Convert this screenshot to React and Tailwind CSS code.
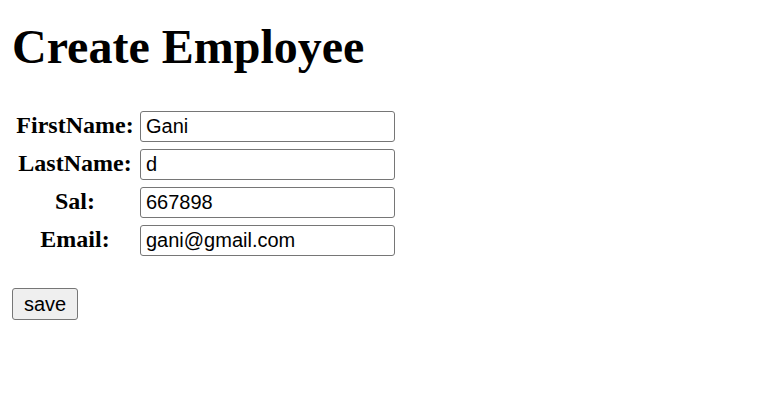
const fields = [
  { label: "FirstName:", value: "Gani" },
  { label: "LastName:", value: "d" },
  { label: "Sal:", value: "667898" },
  { label: "Email:", value: "gani@gmail.com" },
];

const App = () => {
  return (
    <div className="min-h-screen bg-white text-black pl-[12px] pt-[20px] font-['Liberation_Serif',serif]">
      <h1 className="text-[48px] font-bold leading-[53px]">Create Employee</h1>

      <form className="mt-[38px]" onSubmit={(e) => e.preventDefault()}>
        <div className="grid grid-cols-[126px_255px] gap-x-[2px] gap-y-[7px]">
          {fields.map((f) => (
            <div key={f.label} className="contents">
              <label className="pt-[1px] text-center text-[24px] font-bold leading-[27px]">
                {f.label}
              </label>
              <input
                type="text"
                defaultValue={f.value}
                className="h-[31px] w-[255px] rounded-[3px] border border-[#767676] bg-white px-[5px] text-[20px] text-black font-['Liberation_Sans',Arial,sans-serif] outline-none"
              />
            </div>
          ))}
        </div>

        <button
          type="submit"
          className="mt-[32px] h-[32px] rounded-[3px] border border-[#767676] bg-[#efefef] px-[11px] text-[20px] leading-[23px] text-black font-['Liberation_Sans',Arial,sans-serif]"
        >
          save
        </button>
      </form>
    </div>
  );
};

export default App;
